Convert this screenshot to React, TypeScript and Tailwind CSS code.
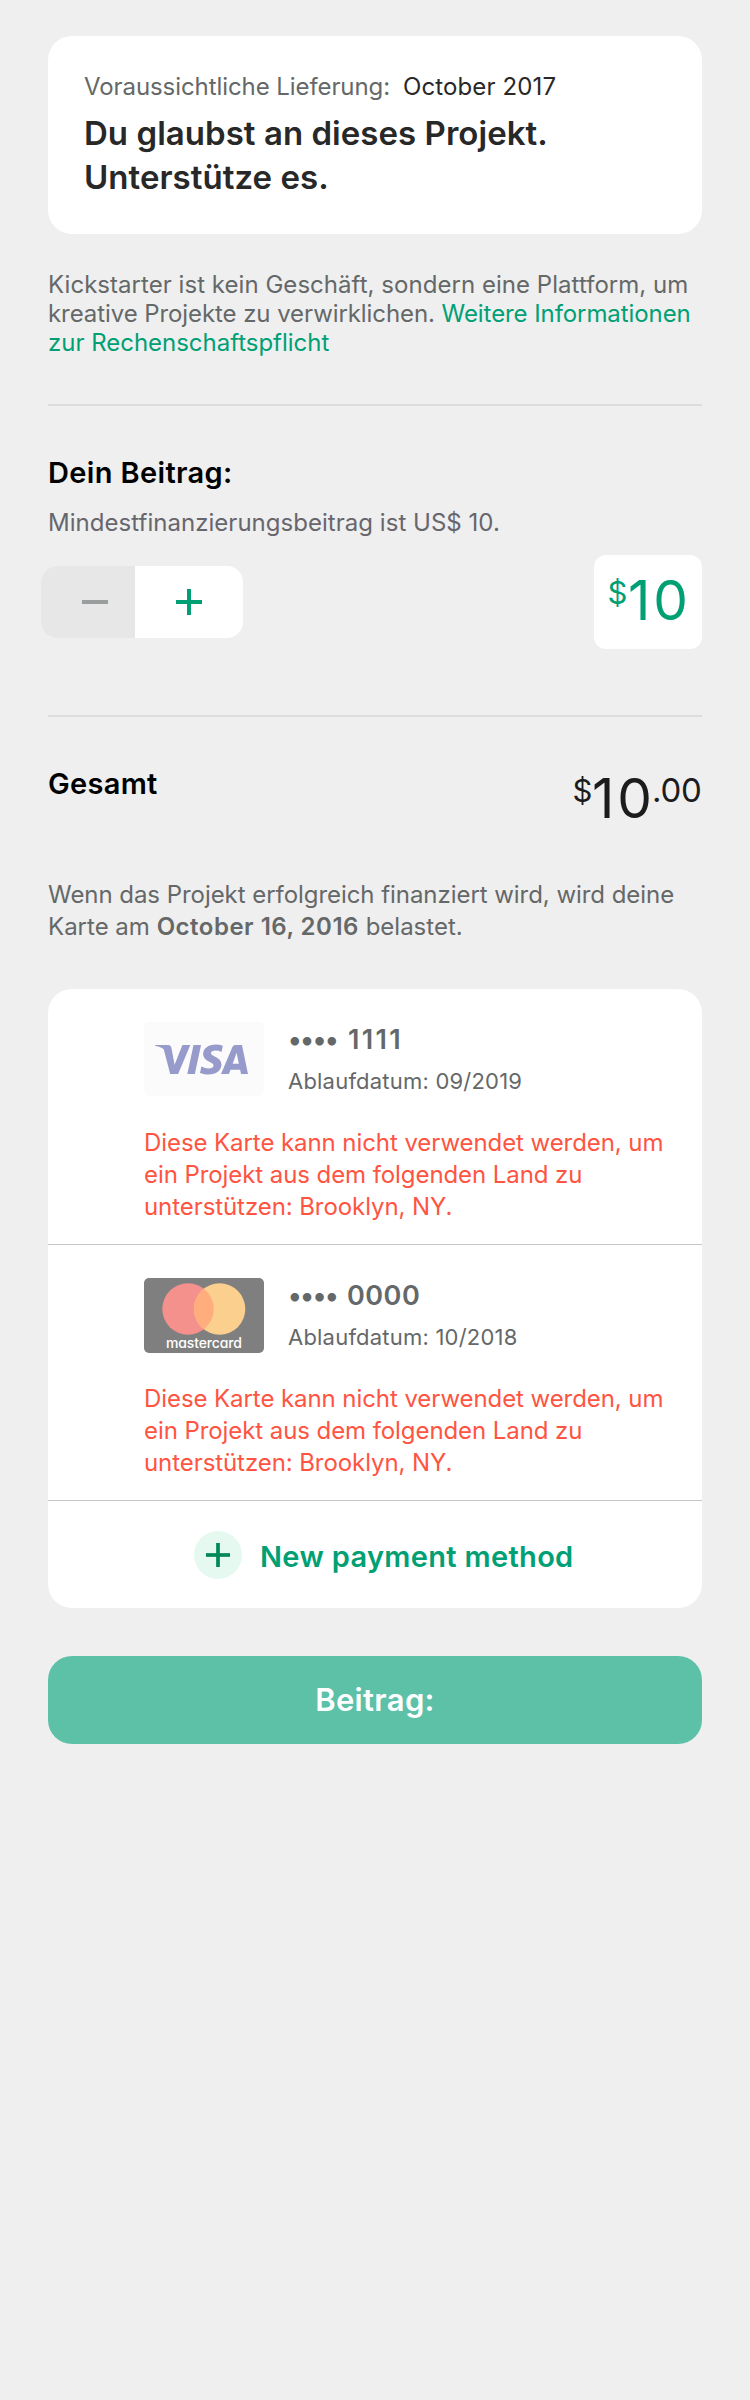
import { SiVisa } from "react-icons/si";

function PlusIcon({ className, color }: { className: string; color: string }) {
  return (
    <svg viewBox="0 0 26 26" className={className} fill={color}>
      <rect x="0" y="11" width="26" height="4" />
      <rect x="11" y="0" width="4" height="26" />
    </svg>
  );
}

function VisaBadge() {
  return (
    <div className="flex h-[74px] w-[120px] shrink-0 items-center rounded-[5px] bg-[#fbfbfb] pl-[11px]">
      <SiVisa className="size-[93px] text-[#969bcb]" />
    </div>
  );
}

function MastercardBadge() {
  return (
    <svg viewBox="0 0 120 75" className="h-[75px] w-[120px] shrink-0">
      <rect width="120" height="75" rx="5" fill="#7f7f7f" />
      <circle cx="44" cy="31" r="25.7" fill="#f5918d" />
      <circle cx="75.6" cy="31" r="25.7" fill="#fbcf8e" />
      <path d="M59.8 10.7a25.7 25.7 0 0 1 0 40.6a25.7 25.7 0 0 1 0-40.6Z" fill="#ffad7c" />
      <text
        x="22"
        y="69.5"
        textLength="76"
        fontSize="14"
        fill="#ffffff"
        className="font-['Inter'] font-medium [font-feature-settings:'cv11']"
      >
        mastercard
      </text>
    </svg>
  );
}

interface Card {
  badge: React.ReactNode;
  digits: React.ReactNode;
  expires: string;
}

const cards: Card[] = [
  { badge: <VisaBadge />, digits: <span className="pl-0.5 tracking-[2.3px]">1111</span>, expires: "09/2019" },
  { badge: <MastercardBadge />, digits: <span className="pl-px tracking-[0.5px]">0000</span>, expires: "10/2018" },
];

function CardRow({ badge, digits, expires }: Card) {
  return (
    <div className="h-64 border-b border-[#c6c6c8] pt-[33px] pl-24">
      <div className="flex h-[75px] gap-6">
        {badge}
        <div className="pt-px text-[#656868]">
          <div className="flex text-[27px] leading-[33px] font-semibold">
            <span className="w-[58px] tracking-[-1.26px]">••••</span>
            {digits}
          </div>
          <div className="mt-3 text-[22px] leading-[26px] tracking-[0.21px]">Ablaufdatum: {expires}</div>
        </div>
      </div>
      <p className="mt-[30px] text-2xl leading-8 tracking-[-0.077px] text-[#ff5442]">
        Diese Karte kann nicht verwendet werden, um
        <br />
        ein Projekt aus dem folgenden Land zu
        <br />
        unterstützen: Brooklyn, NY.
      </p>
    </div>
  );
}

export default function App() {
  return (
    <main className="min-h-[2400px] w-[750px] bg-[#efefef] px-12 pt-9 font-['Inter',sans-serif] text-[#656868]">
      <section className="h-[198px] rounded-3xl bg-white px-9 pt-[37px]">
        <div className="flex text-2xl leading-7">
          <span className="w-[319px] tracking-[-0.08px]">Voraussichtliche Lieferung:</span>
          <span className="tracking-[0.12px] text-[#282828]">October 2017</span>
        </div>
        <h1 className="mt-2.5 text-[33px] leading-[44px] font-semibold tracking-[0.04px] text-[#282828]">
          Du glaubst an dieses Projekt.
          <br />
          Unterstütze es.
        </h1>
      </section>

      <p className="mt-9 text-2xl leading-[29px] whitespace-nowrap">
        <span className="tracking-[0.04px]">Kickstarter ist kein Geschäft, sondern eine Plattform, um</span>
        <br />
        <span className="tracking-[-0.08px]">kreative Projekte zu verwirklichen. </span>
        <a className="tracking-[-0.08px] text-[#00a074]">
          Weitere Informationen
          <br />
          <span className="tracking-[-0.02px]">zur Rechenschaftspflicht</span>
        </a>
      </p>

      <div className="mt-[47px] h-0.5 bg-[#dcdcdc]" />

      <h2 className="mt-[49px] text-[29px] leading-[35px] font-semibold tracking-[0.35px] text-black">Dein Beitrag:</h2>
      <p className="mt-[18px] text-2xl leading-[29px] tracking-[0.03px] text-[#67666d]">
        Mindestfinanzierungsbeitrag ist US$ 10.
      </p>

      <div className="mt-[18px] flex items-start justify-between">
        <div className="mt-[11px] -ml-[7px] flex h-[72px] w-[202px] overflow-hidden rounded-2xl bg-white">
          <button className="flex w-[94px] items-center bg-[#e7e7e7] pl-[41px]">
            <span className="h-1 w-[26px] bg-[#9b9e9e]" />
          </button>
          <button className="flex w-[108px] items-center justify-center">
            <PlusIcon className="size-[26px]" color="#00a074" />
          </button>
        </div>
        <div className="flex h-[94px] w-[108px] rounded-xl bg-white pl-[13.5px] text-[#00a074]">
          <span className="mt-[19px] w-[20.5px] text-[31px] leading-[37px]">$</span>
          <span className="mt-3 text-[55px] leading-[66px] tracking-[2.8px]">10</span>
        </div>
      </div>

      <div className="mt-[66px] h-0.5 bg-[#dcdcdc]" />

      <div className="mt-12 flex h-[66px] justify-between">
        <h2 className="mt-px text-[29px] leading-[35px] font-semibold tracking-[0.3px] text-black">Gesamt</h2>
        <div className="flex text-[#1c1c1c]">
          <span className="mt-[7px] w-[19.5px] text-[31px] leading-[37px]">$</span>
          <span className="w-[60px] text-[55px] leading-[66px] tracking-[2.8px]">10</span>
          <span className="mt-[5px] w-[50px] text-[33px] leading-10 tracking-[-0.2px]">.00</span>
        </div>
      </div>

      <p className="mt-12 text-2xl leading-8 whitespace-nowrap">
        <span className="tracking-[-0.05px]">Wenn das Projekt erfolgreich finanziert wird, wird deine</span>
        <br />
        Karte am <b className="font-semibold tracking-[0.5px]">October 16, 2016</b> belastet.
      </p>

      <section className="mt-[46px] h-[619px] rounded-3xl bg-white">
        {cards.map((card) => (
          <CardRow key={card.expires} {...card} />
        ))}
        <button className="flex items-start gap-[18px] pt-[30px] pl-[146px]">
          <span className="flex size-12 items-center justify-center rounded-full bg-[#e6f9f1]">
            <PlusIcon className="size-6" color="#028858" />
          </span>
          <span className="mt-2 text-[29px] leading-[35px] font-semibold tracking-[0.33px] text-[#00a074]">
            New payment method
          </span>
        </button>
      </section>

      <button className="mt-12 flex h-[88px] w-full items-center justify-center rounded-3xl bg-[#5dc1a8] pb-0.5 text-[31px] leading-[37px] font-semibold tracking-[0.35px] text-white">
        Beitrag:
      </button>
    </main>
  );
}
